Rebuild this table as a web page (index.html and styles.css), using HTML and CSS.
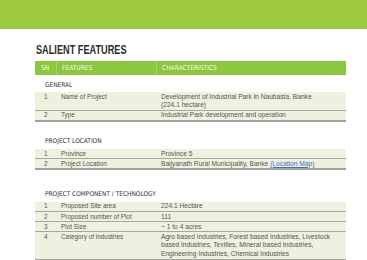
FILE: index.html
```html
<!DOCTYPE html>
<html>
<head>
<meta charset="utf-8">
<link rel="stylesheet" href="styles.css">
</head>
<body>
<div class="banner"></div>
<main class="content">
  <h1 class="title"><span class="narrow">SALIENT FEATURES</span></h1>
  <div class="thead">
    <div class="th th-sn">SN</div>
    <div class="th">FEATURES</div>
    <div class="th">CHARACTERISTICS</div>
  </div>

  <section class="group group-general">
    <div class="label">GENERAL</div>
    <div class="table">
      <div class="row"><div class="c sn">1</div><div class="c">Name of Project</div><div class="c val">Development of Industrial Park in Naubasta, Banke<br>(224.1 hectare)</div></div>
      <div class="row last"><div class="c sn">2</div><div class="c">Type</div><div class="c val">Industrial Park development and operation</div></div>
    </div>
  </section>

  <section class="group group-location">
    <div class="label">PROJECT LOCATION</div>
    <div class="table">
      <div class="row"><div class="c sn">1</div><div class="c">Province</div><div class="c val">Province 5</div></div>
      <div class="row last"><div class="c sn">2</div><div class="c">Project Location</div><div class="c val">Baijyanath Rural Municipality, Banke <a class="link" href="#">(Location Map)</a></div></div>
    </div>
  </section>

  <section class="group group-component">
    <div class="label">PROJECT COMPONENT / TECHNOLOGY</div>
    <div class="table">
      <div class="row"><div class="c sn">1</div><div class="c">Proposed Site area</div><div class="c val">224.1 Hectare</div></div>
      <div class="row"><div class="c sn">2</div><div class="c">Proposed number of Plot</div><div class="c val">111</div></div>
      <div class="row"><div class="c sn">3</div><div class="c">Plot Size</div><div class="c val">~ 1 to 4 acres</div></div>
      <div class="row"><div class="c sn">4</div><div class="c">Category of industries</div><div class="c val">Agro based Industries, Forest based Industries, Livestock based Industries, Textiles, Mineral based Industries, Engineering Industries, Chemical Industries</div></div>
      <div class="row"><div class="c sn">5</div><div class="c">Type of Industries</div><div class="c val">Noodles Industries, Dairy Products Industries, Baby Food Industries</div></div>
    </div>
  </section>
</main>
</body>
</html>
```

FILE: styles.css
```css
html, body {
  margin: 0;
  padding: 0;
  background: #ffffff;
  overflow: hidden;
}

body {
  font-family: "Liberation Sans", Arial, sans-serif;
  color: #555555;
}

.banner {
  height: 29px;
  background: #9cc93e;
}

.content {
  padding: 0 21px 0 35px;
}

.title {
  margin: 14.5px 0 5px 1px;
  font-family: "Liberation Sans", Arial, sans-serif;
  font-weight: bold;
  font-size: 12px;
  line-height: 12.5px;
  color: #2b2b2b;
}

.narrow {
  display: inline-block;
  transform: scaleX(0.765);
  transform-origin: left center;
  white-space: nowrap;
}

.thead {
  display: grid;
  grid-template-columns: 21px 100px 1fr;
  height: 14px;
  background: #8dc63f;
}

.th {
  font-family: "DejaVu Sans Condensed", "Liberation Sans Narrow", sans-serif;
  font-size: 6.6px;
  line-height: 14px;
  color: #f4fae9;
  padding-left: 5px;
  border-left: 1px solid #a9d46c;
}

.th-sn {
  padding-left: 6px;
  border-left: none;
}

.label {
  font-family: "DejaVu Sans Condensed", "Liberation Sans Narrow", sans-serif;
  font-size: 6.5px;
  line-height: 9px;
  color: #333333;
  padding-left: 10px;
}

.group-general {
  margin-top: 5.5px;
}

.group-location {
  margin-top: 15.5px;
}

.group-component {
  margin-top: 20px;
}

.group-general .label {
  margin-bottom: 2.5px;
}

.group-location .label {
  margin-bottom: 3px;
}

.group-component .label {
  margin-bottom: 2.5px;
}

.table {
  display: flex;
  flex-direction: column;
}

.row {
  display: grid;
  grid-template-columns: 21px 100px 1fr;
  background: #eef1df;
  border-bottom: 1px solid #a7a7a0;
  padding-top: 0.5px;
}

.row.last {
  border-bottom: 2px solid #a2a29c;
}

.c {
  font-size: 6.4px;
  line-height: 8.6px;
  padding-left: 5px;
  padding-right: 10px;
  color: #555555;
}

.c.val {
  font-size: 6.65px;
}

.c.sn {
  padding-left: 9px;
  padding-right: 0;
}

.link {
  color: #3e6fc1;
  text-decoration: underline;
}
```
